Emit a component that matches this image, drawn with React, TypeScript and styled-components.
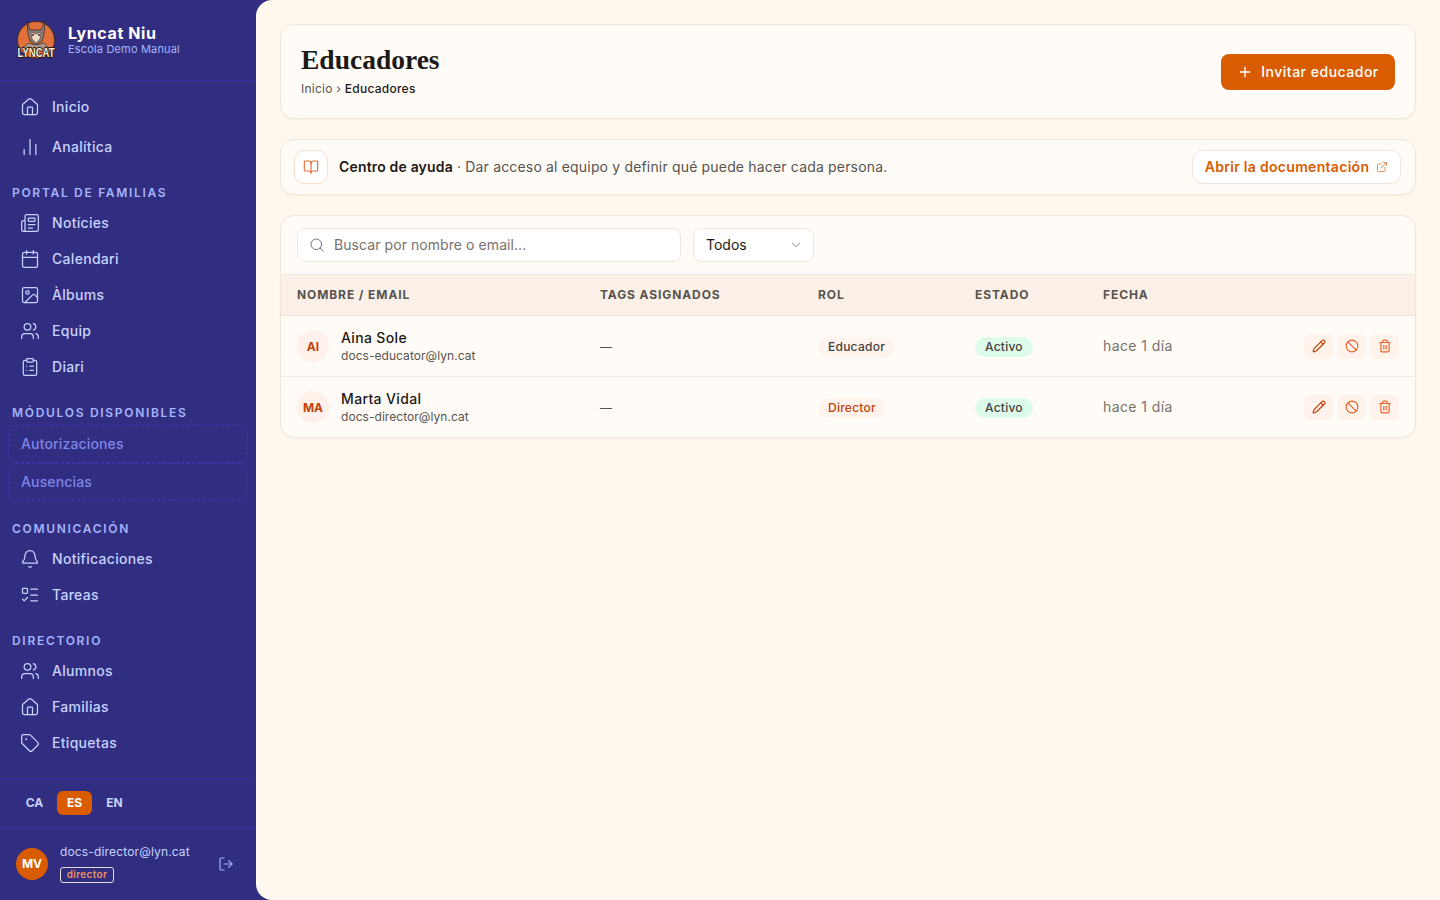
import styled, { createGlobalStyle } from "styled-components";
import {
  Ban,
  Bell,
  BookOpen,
  Calendar,
  ChartNoAxesColumn,
  ChevronDown,
  ClipboardList,
  ExternalLink,
  House,
  Image,
  ListTodo,
  LogOut,
  Newspaper,
  Pencil,
  Plus,
  Search,
  Tag,
  Trash2,
  Users,
} from "lucide-react";

const GlobalStyle = createGlobalStyle`
  * { box-sizing: border-box; }
  html, body { margin: 0; height: 100%; }
  body {
    font-family: Inter, "Noto Sans", sans-serif;
    background: #312e81;
    overflow: hidden;
  }
`;

const Shell = styled.div`
  display: flex;
  height: 900px;
  background: #312e81;
`;

const Sidebar = styled.aside`
  width: 256px;
  flex-shrink: 0;
  display: flex;
  flex-direction: column;
  color: #c7d2fe;
`;

const Brand = styled.div`
  height: 81px;
  display: flex;
  align-items: center;
  gap: 12px;
  padding: 0 16px;
  border-bottom: 1px solid #3730a3;
`;

const LogoSvg = styled.svg`
  flex-shrink: 0;
  overflow: visible;
`;

const BrandName = styled.div`
  font-size: 16px;
  line-height: 18px;
  font-weight: 700;
  letter-spacing: 0.6px;
  color: #fff;
`;

const BrandSchool = styled.div`
  font-size: 11px;
  line-height: 14px;
  letter-spacing: 0.17px;
  color: #a5b4fc;
`;

const Nav = styled.nav`
  flex: 1;
  padding: 8px 8px 0;
`;

const TopGroup = styled.div`
  display: flex;
  flex-direction: column;
  gap: 4px;
`;

const Section = styled.section`
  margin-top: 19px;
`;

const SectionLabel = styled.div`
  height: 16px;
  margin-bottom: 5px;
  padding-left: 4px;
  font-size: 12px;
  line-height: 18px;
  font-weight: 600;
  letter-spacing: 1.7px;
  text-transform: uppercase;
  color: #a5b4fc;
`;

const NavItem = styled.a`
  height: 36px;
  display: flex;
  align-items: center;
  gap: 12px;
  padding: 0 12px;
  font-size: 14px;
  font-weight: 500;
  letter-spacing: 0.3px;
  color: #c7d2fe;
`;

const NavText = styled.span`
  padding-bottom: 2px;
`;

const LockedItem = styled.div`
  height: 38px;
  display: flex;
  align-items: center;
  padding: 0 12px 2px;
  border: 1px dashed #3b35ad;
  border-radius: 8px;
  font-size: 14px;
  font-weight: 500;
  letter-spacing: 0.15px;
  color: #7f85e6;
`;

const LangBar = styled.div`
  height: 50px;
  display: flex;
  align-items: center;
  gap: 5px;
  padding: 0 17px;
  border-top: 1px solid #3730a3;
  border-bottom: 1px solid #3730a3;
`;

const LangButton = styled.button<{ $active?: boolean }>`
  width: 35px;
  height: 24px;
  padding: 0 0 2px;
  border: 0;
  border-radius: 6px;
  font-family: inherit;
  font-size: 12px;
  font-weight: 700;
  background: ${(p) => (p.$active ? "#d95c00" : "transparent")};
  color: ${(p) => (p.$active ? "#fff" : "#c7d2fe")};
`;

const UserBar = styled.div`
  height: 72px;
  display: flex;
  align-items: center;
  gap: 12px;
  padding: 0 22px 1px 16px;
`;

const UserAvatar = styled.div`
  width: 32px;
  height: 32px;
  flex-shrink: 0;
  display: grid;
  place-items: center;
  border-radius: 50%;
  background: #d95c00;
  color: #fff;
  font-size: 12px;
  font-weight: 700;
`;

const UserInfo = styled.div`
  flex: 1;
  min-width: 0;
`;

const UserEmail = styled.div`
  font-size: 12px;
  line-height: 16px;
  letter-spacing: 0.15px;
  margin-bottom: 7px;
  color: #c7d2fe;
`;

const RoleBadge = styled.span`
  display: block;
  width: 54px;
  height: 16px;
  border: 1px solid #e7ded8;
  border-radius: 3px;
  text-align: center;
  font-size: 10px;
  line-height: 13px;
  font-weight: 600;
  letter-spacing: 0.35px;
  color: #ea9460;
`;

const LogoutIcon = styled(LogOut)`
  color: #a5b4fc;
`;

const Main = styled.main`
  flex: 1;
  display: flex;
  flex-direction: column;
  gap: 20px;
  padding: 24px;
  background: #fff8ef;
  border-radius: 16px 0 0 16px;
`;

const Card = styled.div`
  background: #fffcf8;
  border: 1px solid #f1e6dc;
  border-radius: 14px;
  box-shadow: 0 1px 2px rgba(120, 80, 40, 0.05);
`;

const PageHeader = styled(Card)`
  height: 95px;
  display: flex;
  align-items: center;
  justify-content: space-between;
  padding: 0 20px;
`;

const Heading = styled.div`
  padding-bottom: 2px;
`;

const Title = styled.h1`
  margin: 0 0 5px;
  font-family: "Liberation Serif", serif;
  font-size: 27.5px;
  line-height: 32px;
  font-weight: 700;
  color: #1c1917;
`;

const Crumbs = styled.div`
  font-size: 12px;
  line-height: 16px;
  letter-spacing: 0.25px;
  color: #57534e;

  & b {
    font-weight: 500;
    color: #1c1917;
  }
`;

const PrimaryButton = styled.button`
  width: 174px;
  height: 36px;
  display: flex;
  align-items: center;
  justify-content: center;
  gap: 8px;
  border: 0;
  border-radius: 8px;
  background: #d95c00;
  color: #fff;
  font-family: inherit;
  font-size: 14px;
  font-weight: 500;
  letter-spacing: 0.5px;
`;

const HelpCard = styled(Card)`
  height: 56px;
  display: flex;
  align-items: center;
  padding: 0 14px 0 13px;
  gap: 11px;
`;

const HelpIcon = styled.div`
  width: 34px;
  height: 34px;
  display: grid;
  place-items: center;
  border: 1px solid #fadfcc;
  border-radius: 10px;
  background: #fff;
  color: #e2703a;
`;

const HelpText = styled.p`
  flex: 1;
  margin: 0;
  padding-bottom: 2px;
  font-size: 14px;
  letter-spacing: 0.17px;
  color: #57534e;

  & strong {
    font-weight: 600;
    color: #1c1917;
  }
`;

const DocsLink = styled.a`
  width: 209px;
  height: 34px;
  display: flex;
  align-items: center;
  justify-content: center;
  gap: 7px;
  border: 1px solid #f1e6dc;
  border-radius: 10px;
  background: #fff;
  color: #d95c00;
  font-size: 14px;
  font-weight: 600;
  letter-spacing: 0.3px;

  & svg {
    color: #e8813f;
  }
`;

const TextLift = styled.span`
  padding-bottom: 2px;
`;

const TableCard = styled(Card)`
  overflow: hidden;
`;

const Toolbar = styled.div`
  height: 58px;
  display: flex;
  align-items: center;
  gap: 12px;
  padding: 0 16px;
`;

const SearchBox = styled.div`
  width: 384px;
  height: 34px;
  display: flex;
  align-items: center;
  gap: 9px;
  padding: 0 11px;
  border: 1px solid #f1e6dc;
  border-radius: 8px;
  background: #fff;
  color: #78716c;
  font-size: 14px;
  letter-spacing: 0.07px;
`;

const SelectBox = styled.div`
  width: 121px;
  height: 34px;
  display: flex;
  align-items: center;
  justify-content: space-between;
  padding: 0 10px 0 12px;
  border: 1px solid #f1e6dc;
  border-radius: 8px;
  background: #fff;
  color: #1c1917;
  font-size: 14px;

  & svg {
    color: #78716c;
  }
`;

const Row = styled.div`
  display: grid;
  grid-template-columns: 303px 218px 157px 128px 1fr;
  align-items: center;
  padding: 0 16px;
  height: 61px;
  border-top: 1px solid #f0ebe6;
`;

const HeadRow = styled(Row)`
  height: 42px;
  padding-bottom: 2px;
  background: #faf0e8;
  border-top-color: #f1e6dc;
  border-bottom: 1px solid #f1e6dc;
  font-size: 12px;
  font-weight: 700;
  letter-spacing: 0.9px;
  text-transform: uppercase;
  color: #57534e;
`;

const FirstRow = styled(Row)`
  border-top: 0;
  height: 60px;
`;

const Person = styled.div`
  display: flex;
  align-items: center;
  gap: 12px;
`;

const Initials = styled.div`
  width: 32px;
  height: 32px;
  display: grid;
  place-items: center;
  border-radius: 50%;
  background: #fdf1ea;
  color: #c2410c;
  font-size: 12px;
  font-weight: 700;
`;

const Name = styled.div`
  font-size: 14px;
  line-height: 18px;
  font-weight: 500;
  letter-spacing: 0.35px;
  color: #1c1917;
`;

const Email = styled.div`
  margin-top: 1px;
  font-size: 12px;
  line-height: 16px;
  letter-spacing: 0.05px;
  color: #57534e;
`;

const Dash = styled.span`
  font-size: 12px;
  color: #57534e;
`;

const Pill = styled.span<{ $tone: "neutral" | "accent" | "green" }>`
  display: inline-block;
  height: 20px;
  padding: 0 10px;
  border-radius: 10px;
  font-size: 12px;
  line-height: 19px;
  font-weight: 500;
  letter-spacing: 0.25px;
  background: ${(p) => (p.$tone === "green" ? "#dcfbe9" : "#fff3ee")};
  color: ${(p) => (p.$tone === "accent" ? "#c2410c" : "#44403c")};
`;

const DateCell = styled.div`
  display: flex;
  align-items: center;
  justify-content: space-between;
`;

const DateText = styled.span`
  padding-bottom: 2px;
  font-size: 14px;
  letter-spacing: 0.4px;
  color: #78716c;
`;

const Actions = styled.div`
  display: flex;
  gap: 4px;
`;

const ActionButton = styled.button<{ $dark?: boolean }>`
  width: 29px;
  height: 25px;
  display: grid;
  place-items: center;
  padding: 0;
  border: 0;
  border-radius: 6px;
  background: #fff3ec;
  color: ${(p) => (p.$dark ? "#c2410c" : "#e8622a")};
`;

const Logo = () => (
  <LogoSvg width="40" height="40" viewBox="0 0 40 40">
    <circle cx="20" cy="20" r="18.5" fill="#e2703a" stroke="#3a2418" strokeWidth="0.8" />
    <path d="M11 1l3 9h11l4-10-1 14-2 7-6 4-6-4-2-7z" fill="#8d7f78" stroke="#2e211c" strokeWidth="0.7" />
    <path d="M15 12l5 2 5-2-1 7-4 4-4-4z" fill="#efd9c2" stroke="#2e211c" strokeWidth="0.5" />
    <circle cx="17" cy="15" r="0.9" fill="#1c1917" />
    <circle cx="23" cy="15" r="0.9" fill="#1c1917" />
    <path d="M6 29l6-6 8 2 8-2 6 6z" fill="#a99488" stroke="#2e211c" strokeWidth="0.6" />
    <text
      x="20"
      y="37"
      textAnchor="middle"
      fontFamily="Liberation Sans, sans-serif"
      fontSize="13"
      fontWeight="700"
      fill="#fbeed5"
      stroke="#2a1a12"
      strokeWidth="1.8"
      paintOrder="stroke"
      textLength="37"
      lengthAdjust="spacingAndGlyphs"
    >
      LYNCAT
    </text>
  </LogoSvg>
);

const Item = ({ icon: Icon, label }: { icon: typeof House; label: string }) => (
  <NavItem>
    <Icon size={20} strokeWidth={1.5} />
    <NavText>{label}</NavText>
  </NavItem>
);

const RowCells = ({ initials, name, email, role, accent }: {
  initials: string;
  name: string;
  email: string;
  role: string;
  accent?: boolean;
}) => (
  <>
    <Person>
      <Initials>{initials}</Initials>
      <div>
        <Name>{name}</Name>
        <Email>{email}</Email>
      </div>
    </Person>
    <Dash>—</Dash>
    <div>
      <Pill $tone={accent ? "accent" : "neutral"}>{role}</Pill>
    </div>
    <div>
      <Pill $tone="green">Activo</Pill>
    </div>
    <DateCell>
      <DateText>hace 1 día</DateText>
      <Actions>
        <ActionButton $dark>
          <Pencil size={14} strokeWidth={2} />
        </ActionButton>
        <ActionButton>
          <Ban size={14} strokeWidth={2} />
        </ActionButton>
        <ActionButton>
          <Trash2 size={14} strokeWidth={2} />
        </ActionButton>
      </Actions>
    </DateCell>
  </>
);

export default function App() {
  return (
    <Shell>
      <GlobalStyle />
      <Sidebar>
        <Brand>
          <Logo />
          <div>
            <BrandName>Lyncat Niu</BrandName>
            <BrandSchool>Escola Demo Manual</BrandSchool>
          </div>
        </Brand>
        <Nav>
          <TopGroup>
            <Item icon={House} label="Inicio" />
            <Item icon={ChartNoAxesColumn} label="Analítica" />
          </TopGroup>
          <Section>
            <SectionLabel>Portal de familias</SectionLabel>
            <Item icon={Newspaper} label="Notícies" />
            <Item icon={Calendar} label="Calendari" />
            <Item icon={Image} label="Àlbums" />
            <Item icon={Users} label="Equip" />
            <Item icon={ClipboardList} label="Diari" />
          </Section>
          <Section>
            <SectionLabel>Módulos disponibles</SectionLabel>
            <LockedItem>Autorizaciones</LockedItem>
            <LockedItem>Ausencias</LockedItem>
          </Section>
          <Section>
            <SectionLabel>Comunicación</SectionLabel>
            <Item icon={Bell} label="Notificaciones" />
            <Item icon={ListTodo} label="Tareas" />
          </Section>
          <Section>
            <SectionLabel>Directorio</SectionLabel>
            <Item icon={Users} label="Alumnos" />
            <Item icon={House} label="Familias" />
            <Item icon={Tag} label="Etiquetas" />
          </Section>
        </Nav>
        <LangBar>
          <LangButton>CA</LangButton>
          <LangButton $active>ES</LangButton>
          <LangButton>EN</LangButton>
        </LangBar>
        <UserBar>
          <UserAvatar>MV</UserAvatar>
          <UserInfo>
            <UserEmail>docs-director@lyn.cat</UserEmail>
            <RoleBadge>director</RoleBadge>
          </UserInfo>
          <LogoutIcon size={16} strokeWidth={1.75} />
        </UserBar>
      </Sidebar>
      <Main>
        <PageHeader>
          <Heading>
            <Title>Educadores</Title>
            <Crumbs>
              Inicio › <b>Educadores</b>
            </Crumbs>
          </Heading>
          <PrimaryButton>
            <Plus size={16} strokeWidth={2} />
            Invitar educador
          </PrimaryButton>
        </PageHeader>
        <HelpCard>
          <HelpIcon>
            <BookOpen size={16} strokeWidth={1.75} />
          </HelpIcon>
          <HelpText>
            <strong>Centro de ayuda</strong> · Dar acceso al equipo y definir qué puede hacer cada persona.
          </HelpText>
          <DocsLink>
            <TextLift>Abrir la documentación</TextLift>
            <ExternalLink size={12} strokeWidth={1.75} />
          </DocsLink>
        </HelpCard>
        <TableCard>
          <Toolbar>
            <SearchBox>
              <Search size={16} strokeWidth={1.5} />
              <TextLift>Buscar por nombre o email...</TextLift>
            </SearchBox>
            <SelectBox>
              <TextLift>Todos</TextLift>
              <ChevronDown size={14} strokeWidth={1.5} />
            </SelectBox>
          </Toolbar>
          <HeadRow>
            <span>Nombre / Email</span>
            <span>Tags asignados</span>
            <span>Rol</span>
            <span>Estado</span>
            <span>Fecha</span>
          </HeadRow>
          <FirstRow>
            <RowCells initials="AI" name="Aina Sole" email="docs-educator@lyn.cat" role="Educador" />
          </FirstRow>
          <Row>
            <RowCells initials="MA" name="Marta Vidal" email="docs-director@lyn.cat" role="Director" accent />
          </Row>
        </TableCard>
      </Main>
    </Shell>
  );
}
